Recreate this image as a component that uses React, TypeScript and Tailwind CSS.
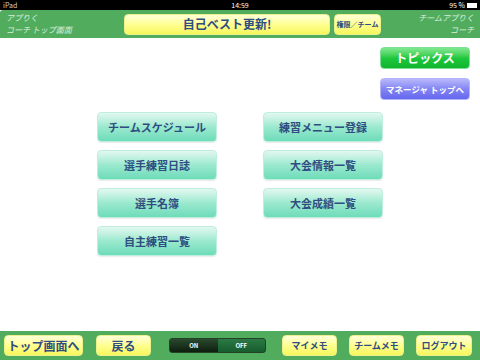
import React from "react";

const font = { fontFamily: '"Noto Sans CJK JP", "Noto Sans", sans-serif' };

function Teal({ label }: { label: string }) {
  return (
    <div className="w-[120px] h-[30px] rounded-[4px] border border-[#bfeedd] bg-gradient-to-b from-[#e2f8f0] via-[#9be9cf] to-[#6cdcb9] flex items-center justify-center text-[11px] font-bold text-[#2f4d80] shadow-[0_1px_1px_rgba(0,0,0,0.08)] whitespace-nowrap">
      {label}
    </div>
  );
}

function Yellow({ label, w, size }: { label: string; w: string; size: string }) {
  return (
    <div
      className={`${w} ${size} h-[21px] rounded-[4px] border border-[#eaf08a] bg-gradient-to-b from-[#ffffd8] via-[#ffff90] to-[#f6f65a] flex items-center justify-center font-bold text-[#2f4d80] whitespace-nowrap`}
    >
      {label}
    </div>
  );
}

export default function App() {
  return (
    <div className="w-[480px] h-[360px] flex flex-col bg-white overflow-hidden" style={font}>
      {/* status bar */}
      <div className="h-[10px] bg-black flex items-center justify-between px-[3px] text-white text-[7px] leading-none relative">
        <span className="text-[#d0d0d0]">iPad</span>
        <span className="absolute left-1/2 -translate-x-1/2">14:59</span>
        <span className="flex items-center gap-[2px]">
          95 %
          <span className="w-[10px] h-[5px] border border-white flex">
            <span className="w-full bg-white" />
          </span>
        </span>
      </div>
      {/* header */}
      <div className="h-[28px] bg-[#52ac5e] flex items-center rounded-tl-[3px]">
        <div className="w-[120px] pl-[6px] flex flex-col text-[#dcecdc] italic text-[8px] leading-[12px]">
          <span>アプりく</span>
          <span>コーチ トップ画面</span>
        </div>
        <div className="ml-[4px] w-[206px] h-[21px] rounded-[4px] border border-[#eaf08a] bg-gradient-to-b from-[#ffffd8] via-[#ffff90] to-[#f6f65a] flex items-center justify-center font-bold text-[#2f4d80] text-[12px]">
          自己ベスト更新!
        </div>
        <div className="ml-[4px]">
          <Yellow label="権限／チーム" w="w-[47px]" size="text-[7px]" />
        </div>
        <div className="flex-1 pr-[6px] flex flex-col items-end text-[#dcecdc] italic text-[8px] leading-[12px]">
          <span>チームアプりく</span>
          <span>コーチ</span>
        </div>
      </div>
      {/* body */}
      <div className="flex-1 relative">
        <div className="absolute left-[380px] top-[9px] flex flex-col gap-[9px]">
          <div className="w-[90px] h-[22px] rounded-[4px] border border-[#7fe09a] bg-gradient-to-b from-[#7ee88f] via-[#1fc83e] to-[#10b52c] flex items-center justify-center text-white font-bold text-[12px]">
            トピックス
          </div>
          <div className="w-[90px] h-[22px] rounded-[4px] border border-[#b4b4f8] bg-gradient-to-b from-[#b8b8fb] via-[#8585f3] to-[#6666ee] flex items-center justify-center text-white font-bold text-[8.5px] whitespace-nowrap">
            マネージャ トップへ
          </div>
        </div>
        <div className="pt-[74px] pl-[97px] grid grid-cols-[120px_120px] gap-x-[46px] gap-y-[8px]">
          <Teal label="チームスケジュール" />
          <Teal label="練習メニュー登録" />
          <Teal label="選手練習日誌" />
          <Teal label="大会情報一覧" />
          <Teal label="選手名簿" />
          <Teal label="大会成績一覧" />
          <Teal label="自主練習一覧" />
        </div>
      </div>
      {/* footer */}
      <div className="h-[29px] bg-[#52ac5e] flex items-center pl-[4px]">
        <Yellow label="トップ画面へ" w="w-[79px]" size="text-[12px]" />
        <div className="ml-[13px]">
          <Yellow label="戻る" w="w-[55px]" size="text-[12px]" />
        </div>
        <div className="ml-[18px] w-[97px] h-[15px] rounded-[3px] bg-gradient-to-b from-[#2a4a2e] to-[#0d1f10] border border-[#244028] flex overflow-hidden text-[6px] font-bold text-white">
          <div className="flex-1 flex items-center justify-center">ON</div>
          <div className="flex-1 flex items-center justify-center bg-gradient-to-b from-[#2b7a45] to-[#175c2e]">OFF</div>
        </div>
        <div className="ml-[16px]">
          <Yellow label="マイメモ" w="w-[55px]" size="text-[9px]" />
        </div>
        <div className="ml-[12px]">
          <Yellow label="チームメモ" w="w-[55px]" size="text-[9px]" />
        </div>
        <div className="ml-[12px]">
          <Yellow label="ログアウト" w="w-[56px]" size="text-[9px]" />
        </div>
      </div>
    </div>
  );
}
